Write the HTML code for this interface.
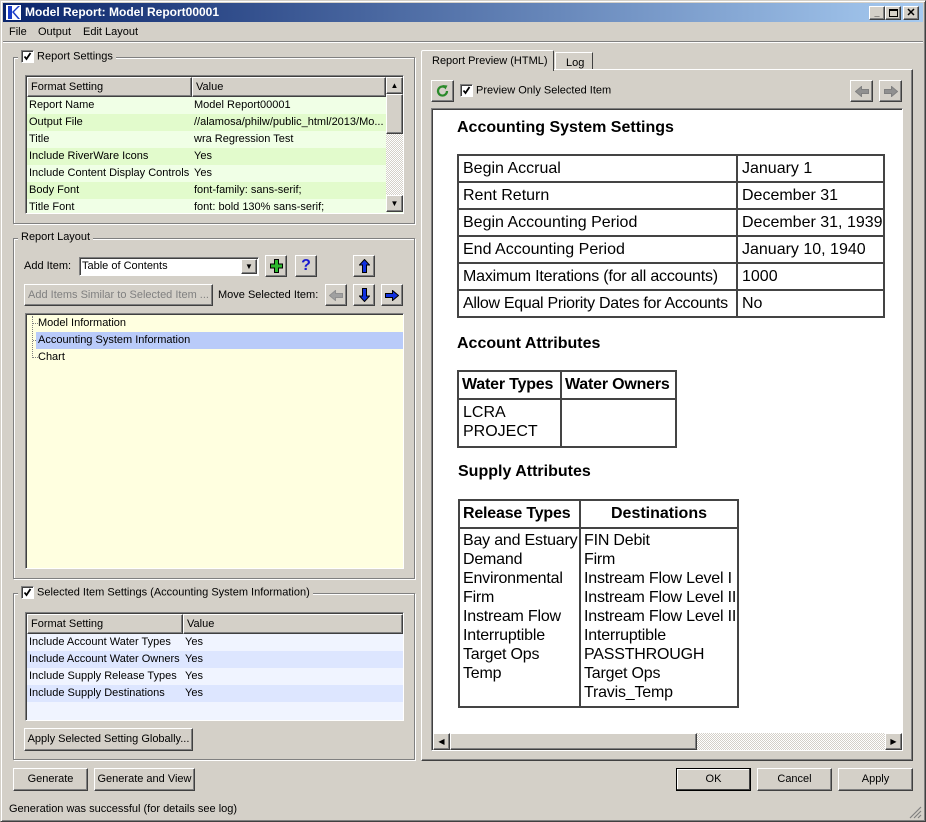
<!DOCTYPE html>
<html><head><meta charset="utf-8"><style>
*{box-sizing:border-box;margin:0;padding:0}
body{width:926px;height:822px;background:#d4d0c8;font-family:"Liberation Sans",sans-serif;font-size:11px;color:#000;position:relative;overflow:hidden}
.a{position:absolute}
.raised{background:#d4d0c8;border:1px solid;border-color:#fff #404040 #404040 #fff;box-shadow:inset -1px -1px 0 #808080}
.sunk{border:1px solid;border-color:#808080 #fff #fff #808080;box-shadow:inset 1px 1px 0 #404040}
.grp{border:1px solid #808080;box-shadow:1px 1px 0 #fff, inset 1px 1px 0 #fff}
.lbl{background:#d4d0c8;padding:0 3px;white-space:nowrap}
.cb{display:inline-block;width:13px;height:13px;background:#fff;border:1px solid;border-color:#808080 #fff #fff #808080;box-shadow:inset 1px 1px 0 #404040;vertical-align:middle;position:relative}
.btn{text-align:center;line-height:21px;white-space:nowrap}
.row{position:absolute;left:0;height:17px;line-height:17px;white-space:nowrap;overflow:hidden}
table.h{border-collapse:separate;border-spacing:0;border:1px solid #444;position:absolute;font-size:16px;table-layout:fixed}
table.h td{border:1px solid #444;padding:0 4px;vertical-align:top;line-height:19px;white-space:nowrap;overflow:hidden}
h3{position:absolute;font-size:16px;font-weight:bold;white-space:nowrap}
</style></head><body>
<div class="a" style="left:0;top:0;width:926px;height:822px;border:1px solid;border-color:#d4d0c8 #404040 #404040 #d4d0c8;box-shadow:inset 1px 1px 0 #fff,inset -1px -1px 0 #808080"></div>
<div class="a" style="left:3px;top:3px;width:920px;height:19px;background:linear-gradient(90deg,#0a246a,#a6caf0)"></div>
<div class="a" style="left:5px;top:4px;width:17px;height:17px;background:#fff;border:1px solid #0a246a"><svg width="15" height="15"><path d="M2 1 L6 1 L6 14 L2 14Z M6 7 L12 1 L14 1 L8 7 L14 14 L12 14Z" fill="#1a3cc8"/></svg></div>
<div class="a" style="left:25px;top:5px;color:#fff;font-weight:bold;font-size:12px">Model Report: Model Report00001</div>
<div class="a raised" style="left:869px;top:6px;width:16px;height:14px;font-size:9px;text-align:center;line-height:12px;font-weight:bold">_</div>
<div class="a raised" style="left:885px;top:6px;width:16px;height:14px"><div class="a" style="left:3px;top:2px;width:9px;height:8px;border:1px solid #000;border-top-width:2px"></div></div>
<div class="a raised" style="left:903px;top:6px;width:16px;height:14px;font-size:11px;text-align:center;line-height:12px;font-weight:bold">✕</div>
<div class="a" style="left:9px;top:26px">File</div>
<div class="a" style="left:38px;top:26px">Output</div>
<div class="a" style="left:83px;top:26px">Edit Layout</div>
<div class="a" style="left:3px;top:41px;width:920px;height:1px;background:#808080"></div>
<div class="a" style="left:3px;top:42px;width:920px;height:1px;background:#fff"></div>

<svg width="0" height="0" style="position:absolute"><defs><path id="ck" d="M2.5 5.5l2 2.5 4-6" fill="none" stroke="#000" stroke-width="1.8"/></defs></svg>

<div class="a grp" style="left:13px;top:57px;width:402px;height:167px"></div>
<div class="a lbl" style="left:18px;top:50px"><span class="cb"><svg width="11" height="11"><use href="#ck"/></svg></span> Report Settings</div>
<div class="a sunk" style="left:25px;top:75px;width:379px;height:139px;background:#f0ffe6;overflow:hidden">
 <div class="a raised" style="left:1px;top:1px;width:165px;height:20px;line-height:18px;padding-left:3px">Format Setting</div>
 <div class="a raised" style="left:166px;top:1px;width:194px;height:20px;line-height:18px;padding-left:3px">Value</div>
 <div class="a" style="left:1px;top:21px;width:359px">
  <div class="row" style="top:0;width:359px;background:#f0ffe6"><span style="margin-left:2px">Report Name</span><span class="a" style="left:167px">Model Report00001</span></div>
  <div class="row" style="top:17px;width:359px;background:#e2fbcc"><span style="margin-left:2px">Output File</span><span class="a" style="left:167px">//alamosa/philw/public_html/2013/Mo...</span></div>
  <div class="row" style="top:34px;width:359px;background:#f0ffe6"><span style="margin-left:2px">Title</span><span class="a" style="left:167px">wra Regression Test</span></div>
  <div class="row" style="top:51px;width:359px;background:#e2fbcc"><span style="margin-left:2px">Include RiverWare Icons</span><span class="a" style="left:167px">Yes</span></div>
  <div class="row" style="top:68px;width:359px;background:#f0ffe6"><span style="margin-left:2px">Include Content Display Controls</span><span class="a" style="left:167px">Yes</span></div>
  <div class="row" style="top:85px;width:359px;background:#e2fbcc"><span style="margin-left:2px">Body Font</span><span class="a" style="left:167px">font-family: sans-serif;</span></div>
  <div class="row" style="top:102px;width:359px;background:#f0ffe6"><span style="margin-left:2px">Title Font</span><span class="a" style="left:167px">font: bold 130% sans-serif;</span></div>
 </div>
 <div class="a" style="left:360px;top:1px;width:17px;height:135px;background:repeating-conic-gradient(#fff 0 25%,#d4d0c8 0 50%) 0 0/2px 2px"></div>
 <div class="a raised" style="left:360px;top:1px;width:17px;height:17px;font-size:8px;text-align:center;line-height:15px">▲</div>
 <div class="a raised" style="left:360px;top:18px;width:17px;height:40px"></div>
 <div class="a raised" style="left:360px;top:119px;width:17px;height:17px;font-size:8px;text-align:center;line-height:15px">▼</div>
</div>

<div class="a grp" style="left:13px;top:238px;width:402px;height:341px"></div>
<div class="a lbl" style="left:18px;top:231px">Report Layout</div>
<div class="a" style="left:24px;top:260px">Add Item:</div>
<div class="a sunk" style="left:79px;top:257px;width:180px;height:19px;background:#fff"><span class="a" style="left:2px;top:2px">Table of Contents</span><div class="a raised" style="left:161px;top:1px;width:16px;height:15px;font-size:8px;text-align:center;line-height:13px">▼</div></div>
<div class="a raised" style="left:265px;top:255px;width:22px;height:22px"><svg class="a" style="left:4px;top:3px" width="13" height="14"><path d="M4.5 .5h4v4.5h4v4h-4v4.5h-4v-4.5h-4v-4h4z" fill="#2db82d" stroke="#000"/></svg></div>
<div class="a raised" style="left:295px;top:255px;width:22px;height:22px;color:#1a1ad0;font-weight:bold;font-size:16px;text-align:center;line-height:19px">?</div>
<div class="a raised" style="left:353px;top:255px;width:22px;height:22px"><svg class="a" style="left:5px;top:3px" width="11" height="14"><path d="M5.5 .5l5 5.5h-3v7.5h-4v-7.5h-3z" fill="#1030e0" stroke="#000"/></svg></div>
<div class="a raised btn" style="left:24px;top:284px;width:189px;height:22px;color:#808080">Add Items Similar to Selected Item ...</div>
<div class="a" style="left:218px;top:289px">Move Selected Item:</div>
<div class="a raised" style="left:325px;top:284px;width:22px;height:22px"><svg class="a" style="left:3px;top:5px" width="14" height="11"><path d="M.5 5.5l6-5v3h7v4h-7v3z" fill="#a0a0a0" stroke="#909090"/></svg></div>
<div class="a raised" style="left:353px;top:284px;width:22px;height:22px"><svg class="a" style="left:5px;top:3px" width="11" height="14"><path d="M5.5 13.5l5-5.5h-3v-7.5h-4v7.5h-3z" fill="#1030e0" stroke="#000"/></svg></div>
<div class="a raised" style="left:381px;top:284px;width:22px;height:22px"><svg class="a" style="left:3px;top:5px" width="14" height="11"><path d="M13.5 5.5l-6-5v3h-7v4h7v3z" fill="#1030e0" stroke="#000"/></svg></div>
<div class="a sunk" style="left:25px;top:313px;width:379px;height:256px;background:#ffffe0">
 <div class="a" style="left:6px;top:2px;width:1px;height:42px;border-left:1px dotted #808080"></div>
 <div class="a" style="left:7px;top:9px;width:5px;border-top:1px dotted #808080"></div>
 <div class="a" style="left:7px;top:26px;width:5px;border-top:1px dotted #808080"></div>
 <div class="a" style="left:7px;top:43px;width:5px;border-top:1px dotted #808080"></div>
 <div class="row" style="left:12px;top:1px">Model Information</div>
 <div class="row" style="left:10px;top:18px;width:367px;background:#b9cbf9;padding-left:2px">Accounting System Information</div>
 <div class="row" style="left:12px;top:35px">Chart</div>
</div>

<div class="a grp" style="left:13px;top:593px;width:402px;height:167px"></div>
<div class="a lbl" style="left:18px;top:586px"><span class="cb"><svg width="11" height="11"><use href="#ck"/></svg></span> Selected Item Settings (Accounting System Information)</div>
<div class="a sunk" style="left:25px;top:612px;width:379px;height:109px;background:#f0f4ff;overflow:hidden">
 <div class="a raised" style="left:1px;top:1px;width:156px;height:20px;line-height:18px;padding-left:3px">Format Setting</div>
 <div class="a raised" style="left:157px;top:1px;width:220px;height:20px;line-height:18px;padding-left:3px">Value</div>
 <div class="row" style="top:21px;left:1px;width:376px;background:#f0f4ff"><span style="margin-left:2px">Include Account Water Types</span><span class="a" style="left:158px">Yes</span></div>
 <div class="row" style="top:38px;left:1px;width:376px;background:#dde6ff"><span style="margin-left:2px">Include Account Water Owners</span><span class="a" style="left:158px">Yes</span></div>
 <div class="row" style="top:55px;left:1px;width:376px;background:#f0f4ff"><span style="margin-left:2px">Include Supply Release Types</span><span class="a" style="left:158px">Yes</span></div>
 <div class="row" style="top:72px;left:1px;width:376px;background:#dde6ff"><span style="margin-left:2px">Include Supply Destinations</span><span class="a" style="left:158px">Yes</span></div>
</div>
<div class="a raised btn" style="left:24px;top:728px;width:169px;height:23px">Apply Selected Setting Globally...</div>

<div class="a raised btn" style="left:13px;top:768px;width:75px;height:23px">Generate</div>
<div class="a raised btn" style="left:94px;top:768px;width:101px;height:23px">Generate and View</div>
<div class="a" style="left:9px;top:803px">Generation was successful (for details see log)</div>

<div class="a" style="left:421px;top:69px;width:492px;height:692px;border:1px solid;border-color:#fff #404040 #404040 #fff;box-shadow:inset -1px -1px 0 #808080"></div>
<div class="a" style="left:421px;top:50px;width:133px;height:21px;background:#d4d0c8;border:1px solid;border-color:#fff #404040 transparent #fff;border-bottom:none;border-radius:2px 2px 0 0;padding:4px 0 0 10px">Report Preview (HTML)</div>
<div class="a" style="left:555px;top:52px;width:38px;height:17px;border:1px solid;border-color:#fff #404040 transparent #fff;border-bottom:none;padding:4px 0 0 10px">Log</div>
<div class="a raised" style="left:431px;top:80px;width:23px;height:22px"><svg class="a" style="left:4px;top:3px" width="14" height="14"><path d="M11 7a4.5 4.5 0 1 1-2-3.7" fill="none" stroke="#2a8a2a" stroke-width="2.2"/><path d="M6.5 1l5 .5-2 4z" fill="#2a8a2a"/></svg></div>
<div class="a" style="left:460px;top:84px"><span class="cb"><svg width="11" height="11"><use href="#ck"/></svg></span> Preview Only Selected Item</div>
<div class="a raised" style="left:850px;top:80px;width:23px;height:22px"><svg class="a" style="left:4px;top:5px" width="14" height="11"><path d="M.5 5.5l6-5v3h7v4h-7v3z" fill="#909090" stroke="#808080"/></svg></div>
<div class="a raised" style="left:879px;top:80px;width:23px;height:22px"><svg class="a" style="left:4px;top:5px" width="14" height="11"><path d="M13.5 5.5l-6-5v3h-7v4h7v3z" fill="#909090" stroke="#808080"/></svg></div>

<div class="a sunk" style="left:431px;top:108px;width:472px;height:643px;background:#fff;overflow:hidden">
 <div class="a" style="left:0;top:0;width:470px;height:641px">
 <h3 style="left:25px;top:10px">Accounting System Settings</h3>
 <table class="h" style="left:25px;top:45px;width:428px">
  <colgroup><col style="width:279px"><col></colgroup>
  <tr><td style="height:27px;line-height:25px">Begin Accrual</td><td style="line-height:25px">January 1</td></tr>
  <tr><td style="height:27px;line-height:25px">Rent Return</td><td style="line-height:25px">December 31</td></tr>
  <tr><td style="height:27px;line-height:25px">Begin Accounting Period</td><td style="line-height:25px">December 31, 1939</td></tr>
  <tr><td style="height:27px;line-height:25px">End Accounting Period</td><td style="line-height:25px">January 10, 1940</td></tr>
  <tr><td style="height:27px;line-height:25px;letter-spacing:-0.2px">Maximum Iterations (for all accounts)</td><td style="line-height:25px">1000</td></tr>
  <tr><td style="height:27px;line-height:25px;letter-spacing:-0.3px;padding-right:0">Allow Equal Priority Dates for Accounts</td><td style="line-height:25px">No</td></tr>
 </table>
 <h3 style="left:25px;top:226px">Account Attributes</h3>
 <table class="h" style="left:25px;top:261px;width:220px">
  <colgroup><col style="width:103px"><col></colgroup>
  <tr><td style="height:28px;font-weight:bold;line-height:25px;padding:0 3px;letter-spacing:-0.2px">Water Types</td><td style="font-weight:bold;line-height:25px;padding:0 3px;letter-spacing:-0.2px">Water Owners</td></tr>
  <tr><td style="height:48px;padding-top:3px">LCRA<br>PROJECT</td><td></td></tr>
 </table>
 <h3 style="left:26px;top:354px">Supply Attributes</h3>
 <table class="h" style="left:26px;top:390px;width:281px">
  <colgroup><col style="width:121px"><col></colgroup>
  <tr><td style="height:28px;font-weight:bold;line-height:25px;padding:0 3px;letter-spacing:-0.2px">Release Types</td><td style="font-weight:bold;text-align:center;line-height:25px">Destinations</td></tr>
  <tr><td style="height:179px;padding:2px 3px;letter-spacing:-0.2px">Bay and Estuary<br>Demand<br>Environmental<br>Firm<br>Instream Flow<br>Interruptible<br>Target Ops<br>Temp</td><td style="padding:2px 0 0 3px;letter-spacing:-0.2px">FIN Debit<br>Firm<br>Instream Flow Level I<br>Instream Flow Level II<br>Instream Flow Level III<br>Interruptible<br>PASSTHROUGH<br>Target Ops<br>Travis_Temp</td></tr>
 </table>
 </div>
 <div class="a" style="left:1px;top:624px;width:469px;height:17px;background:repeating-conic-gradient(#fff 0 25%,#d4d0c8 0 50%) 0 0/2px 2px"></div>
 <div class="a raised" style="left:1px;top:624px;width:17px;height:17px;font-size:8px;text-align:center;line-height:15px">◀</div>
 <div class="a raised" style="left:18px;top:624px;width:247px;height:17px"></div>
 <div class="a raised" style="left:453px;top:624px;width:17px;height:17px;font-size:8px;text-align:center;line-height:15px">▶</div>
</div>

<div class="a raised btn" style="left:676px;top:768px;width:75px;height:23px;border-color:#000;box-shadow:inset -1px -1px 0 #404040,inset 1px 1px 0 #fff">OK</div>
<div class="a raised btn" style="left:757px;top:768px;width:75px;height:23px">Cancel</div>
<div class="a raised btn" style="left:838px;top:768px;width:75px;height:23px">Apply</div>
<svg class="a" style="left:908px;top:805px" width="14" height="14"><path d="M13 2L2 13M13 6L6 13M13 10L10 13" stroke="#808080" stroke-width="1.2"/></svg>
</body></html>
